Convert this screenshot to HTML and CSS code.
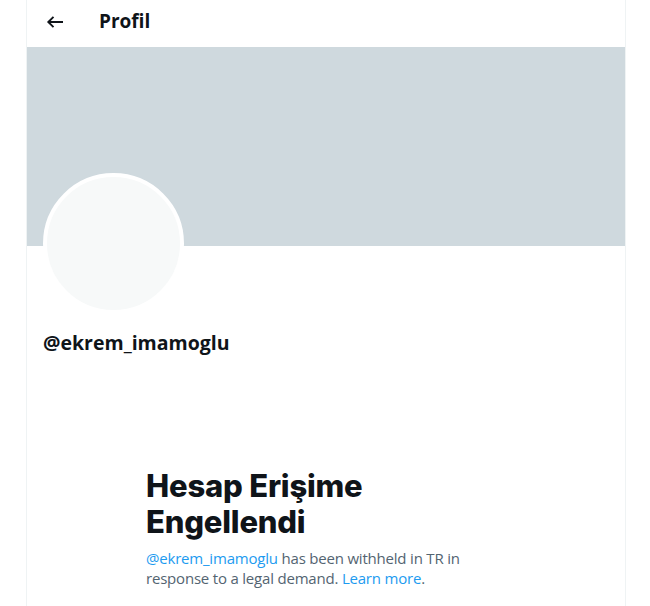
FILE: index.html
```html
<!DOCTYPE html>
<html lang="tr">
<head>
  <meta charset="UTF-8">
  <meta name="viewport" content="width=device-width, initial-scale=1.0">
  <title>Profil</title>
  <link rel="stylesheet" href="styles.css">
</head>
<body>
  <div class="column">
    <div class="top-bar">
      <a href="#" class="back">
        <svg viewBox="0 0 20 20" width="20" height="20"><path d="M18 10H3.5M8.5 4.8L3.3 10l5.2 5.2" fill="none" stroke="#0f1419" stroke-width="1.9"/></svg>
      </a>
      <h2 class="title">Profil</h2>
    </div>

    <div class="banner"></div>

    <div class="profile">
      <div class="avatar"></div>
      <div class="handle">@ekrem_imamoglu</div>
    </div>

    <div class="empty-state">
      <h1>Hesap Erişime Engellendi</h1>
      <p><a href="#">@ekrem_imamoglu</a> has been withheld in TR in response to a legal demand. <a href="#">Learn more</a>.</p>
    </div>
  </div>
</body>
</html>
```
FILE: styles.css
```css
body {
  margin: 0;
  background: #fff;
  font-family: "Open Sans", "Noto Sans", sans-serif;
  color: #0f1419;
}
.column {
  width: 598px;
  margin-left: 26px;
  min-height: 606px;
  border-left: 1px solid #eff3f4;
  border-right: 1px solid #eff3f4;
}
.top-bar {
  height: 43px;
  padding: 0 16px 4px;
  display: flex;
  align-items: center;
}
.back {
  display: flex;
  width: 20px;
  height: 20px;
  margin-left: 2px;
}
.title {
  margin: 0 0 0 34px;
  font-size: 19px;
  font-weight: 700;
  margin-top: -2px;
}
.banner {
  height: 199px;
  background: #cfd9de;
}
.profile {
  padding: 0 16px;
}
.avatar {
  width: 133px;
  height: 133px;
  margin-top: -73px;
  border: 4px solid #fff;
  border-radius: 50%;
  background: #f7f9f9;
}
.handle {
  margin-top: 17px;
  font-size: 19.5px;
  font-weight: 700;
  line-height: 24px;
}
.empty-state {
  width: 360px;
  margin: 0 auto;
  padding: 113px 20px 0;
}
.empty-state h1 {
  margin: 0 0 8px;
  font-family: Inter, sans-serif;
  font-size: 31px;
  font-weight: 800;
  line-height: 36px;
  letter-spacing: -0.2px;
}
.empty-state p {
  margin: 0;
  font-size: 15px;
  line-height: 20px;
  letter-spacing: -0.2px;
  color: #536471;
}
.empty-state a {
  color: #1d9bf0;
  text-decoration: none;
}
```
